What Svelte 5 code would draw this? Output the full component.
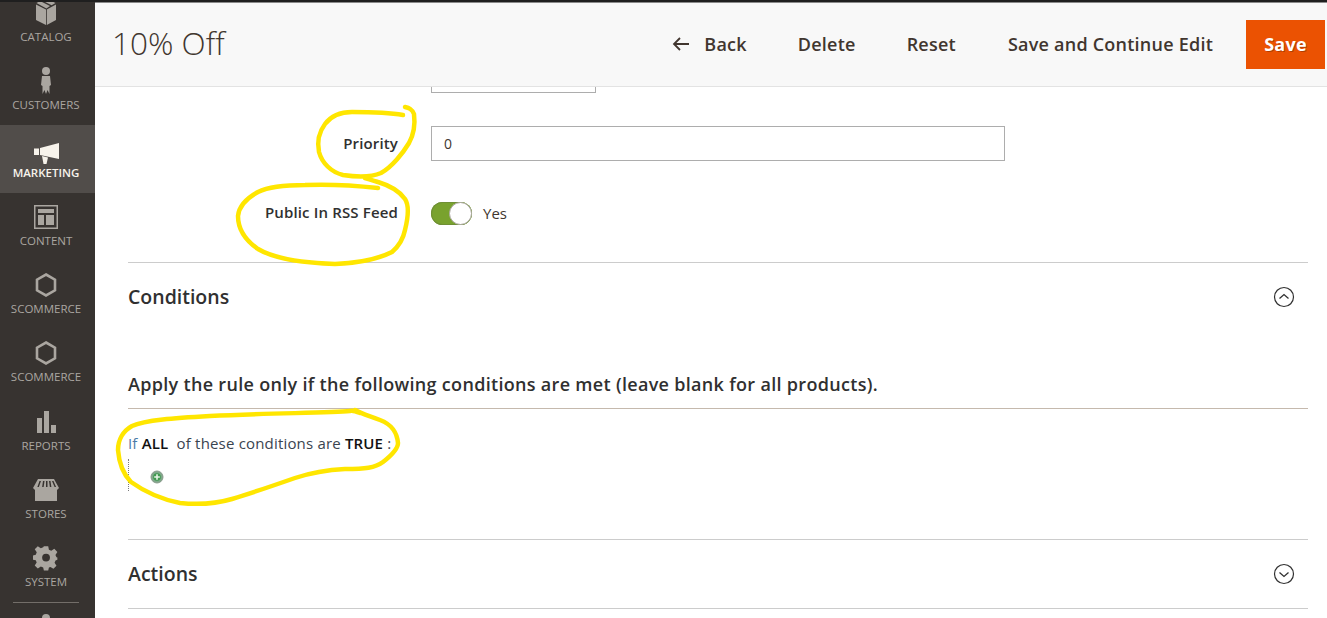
<script>
  const navTop = [
    { label: 'Catalog', icon: 'catalog' },
    { label: 'Customers', icon: 'customers' },
    { label: 'Marketing', icon: 'marketing', active: true },
    { label: 'Content', icon: 'content' },
    { label: 'Scommerce', icon: 'hex' },
    { label: 'Scommerce', icon: 'hex' },
    { label: 'Reports', icon: 'reports' },
    { label: 'Stores', icon: 'stores' },
    { label: 'System', icon: 'system' }
  ];
</script>

<div class="page">
  <aside class="side">
    {#each navTop as item}
      <div class="nav" class:active={item.active}>
        <svg class="ico" viewBox="0 0 30 30" width="30" height="30" fill="currentColor" aria-hidden="true">
          {#if item.icon === 'catalog'}
            <path d="M5 6.5 15 11.5V27L5 22ZM25 6.5 15.8 11.5V27L25 22ZM5.5 5 9 3 19 8 15.4 10.4ZM10.5 2.2 14.5 0 24.5 5 20.6 7.2Z" />
          {:else if item.icon === 'customers'}
            <circle cx="15" cy="5" r="4" />
            <path d="M11 10H19L20 19 18.5 20V28L16.5 24 15 28 13.5 24 11.5 28V20L10 19Z" />
          {:else if item.icon === 'marketing'}
            <path d="M9 14 28 9V25L9 21ZM3 14.5H8V21H3ZM11 22 17 23.5 15.5 30H12.5Z" />
          {:else if item.icon === 'content'}
            <path fill-rule="evenodd" d="M3 3H27V27H3ZM4.5 4.5V25.5H25.5V4.5ZM7 7H23V11H7ZM7 13H13V23H7ZM15 13H23V23H15Z" />
          {:else if item.icon === 'hex'}
            <path d="M15 4.5 24 9.7V20.3L15 25.5 6 20.3V9.7Z" fill="none" stroke="currentColor" stroke-width="2.6" />
          {:else if item.icon === 'reports'}
            <path d="M6 11H11V26H6ZM13 4H18V26H13ZM20 18H25V26H20Z" />
          {:else if item.icon === 'stores'}
            <path d="M6 13H28V27H6Z" transform="translate(-2 -1)" />
            <path fill-rule="evenodd" d="M7 4H23L28 13 26 15H4L2 13ZM8.5 6 6 13H7.5L10 6ZM12 6 11 13H12.5L13.5 6ZM15 6 15 13H16.5L16.5 6ZM18 6 19 13H20.5L19.5 6ZM21 6 24 13H25.5L22.5 6Z" />
          {:else}
            <path fill-rule="evenodd" d="M12.5 2H17.5L18.3 6 21 7.2 24.5 5 28 8.5 25.8 12 27 14.7 28 15 28 17.5 25.9 18.3 24.8 21 27 24.5 23.5 28 20 25.8 18.3 26.5 17.5 30H12.5L11.7 26.5 9 25.4 5.5 27.6 2 24 4.2 20.6 3.2 18 0 17.5V12.5L3.2 11.7 4.3 9 2 5.5 5.5 2 9 4.2 11.7 3.2ZM15 10.5A4.5 4.5 0 1 0 15 19.5 4.5 4.5 0 1 0 15 10.5Z" transform="translate(2 1.5) scale(.87)" />
          {/if}
        </svg>
        <span class="nav-label">{item.label}</span>
      </div>
    {/each}
    <div class="nav-rule"></div>
    <div class="nav-next"></div>
  </aside>

  <main class="main">
    <header class="bar">
      <h1>10% Off</h1>
      <div class="actions">
        <span class="act back">
          <svg viewBox="0 0 18 14" width="18" height="14" fill="none" stroke="#41362f" stroke-width="1.8" aria-hidden="true">
            <path d="M17 7H2M8 1 2 7 8 13" />
          </svg>
          Back
        </span>
        <span class="act">Delete</span>
        <span class="act">Reset</span>
        <span class="act">Save and Continue Edit</span>
        <span class="save">Save</span>
      </div>
    </header>

    <section class="content">
      <div class="row clipped">
        <span class="lbl"></span>
        <div class="input short"></div>
      </div>
      <div class="row prio">
        <span class="lbl">Priority</span>
        <div class="input long">0</div>
      </div>
      <div class="row rss">
        <span class="lbl">Public In RSS Feed</span>
        <span class="toggle"><span class="knob"></span></span>
        <span class="yes">Yes</span>
      </div>

      <div class="sect open">
        <h2>Conditions</h2>
        <svg viewBox="0 0 22 22" width="22" height="22" fill="none" stroke="#303030" aria-hidden="true">
          <circle cx="11" cy="11" r="9.5" stroke-width="1.2" />
          <path d="M6.5 12.5 11 8.5 15.5 12.5" stroke-width="1.3" />
        </svg>
      </div>
      <h3>Apply the rule only if the following conditions are met (leave blank for all products).</h3>
      <p class="rule"><span class="if">If</span> <b>ALL</b>&nbsp; of these conditions are <b>TRUE</b> :</p>
      <div class="tree">
        <svg viewBox="0 0 14 14" width="14" height="14" aria-hidden="true">
          <circle cx="7" cy="7" r="6" fill="#7fa98a" stroke="#8a9a8d" />
          <circle cx="7" cy="7" r="3.8" fill="#3f9a4f" />
          <path d="M7 4.2V9.8M4.2 7H9.8" stroke="#e6f3e6" stroke-width="1.6" />
        </svg>
      </div>
      <div class="sect closed">
        <h2>Actions</h2>
        <svg viewBox="0 0 22 22" width="22" height="22" fill="none" stroke="#303030" aria-hidden="true">
          <circle cx="11" cy="11" r="9.5" stroke-width="1.2" />
          <path d="M6.5 9.5 11 13.5 15.5 9.5" stroke-width="1.3" />
        </svg>
      </div>
    </section>
  </main>

  <svg class="marks" viewBox="0 0 1327 618" width="1327" height="618" fill="none" stroke="#ffe600" stroke-width="4.5" stroke-linecap="round" stroke-linejoin="round" aria-hidden="true">
    <path d="M403 115C392 113 370 112 352 112 340 112 331 116 325 124 319 132 317 142 319 152 322 163 331 172 343 175 356 177 372 177 381 173 392 167 403 153 409 143 414 134 415 122 414 114 412 109 409 108 405 107" />
    <path d="M378 188C360 186 330 184 305 185 285 185 268 187 258 192 247 198 239 206 238 216 238 228 245 240 258 249 275 259 305 263 335 264 360 263 380 258 392 252 399 246 403 240 405 230 408 218 409 205 405 199 398 189 388 185 378 182 372 180 368 179 365 178" />
    <path d="M360 413C355 411 352 410 350 411 330 413 270 413 210 416 175 418 145 420 132 426 123 431 118 440 118 450 119 463 122 473 131 482 145 492 160 499 180 503 200 505 215 504 232 499 255 492 275 485 295 478 310 473 325 470 345 469 365 469 375 468 383 462 392 455 398 449 398 443 397 433 393 425 380 420 370 416 362 414 355 410" />
  </svg>
</div>

<style>
  :global(body) {
    margin: 0;
    background: #fff;
  }
  .page {
    position: relative;
    display: flex;
    width: 1327px;
    height: 618px;
    overflow: hidden;
    border-top: 2px solid #1f1f1f;
    box-sizing: border-box;
    font-family: "Open Sans", "Noto Sans", sans-serif;
    color: #303030;
  }
  .side {
    flex: 0 0 95px;
    box-sizing: border-box;
    display: flex;
    flex-direction: column;
    background: #373330;
    overflow: hidden;
  }
  .nav {
    flex: 0 0 68.125px;
    display: flex;
    flex-direction: column;
    align-items: center;
    justify-content: flex-end;
    padding: 0 3px 13px 0;
    box-sizing: border-box;
    color: #aaa6a0;
  }
  .nav:first-child {
    margin-top: -13.3px;
  }
  .nav.active {
    background: #514d4a;
    color: #f7f3eb;
  }
  .ico {
    display: block;
    margin-bottom: 2px;
  }
  .nav-label {
    font-size: 11.5px;
    line-height: 14px;
    text-transform: uppercase;
  }
  .nav.active .nav-label {
    font-weight: 600;
  }
  .nav-rule {
    flex: none;
    width: 66px;
    height: 1px;
    margin: 0 16px 0 13px;
    background: #736e69;
  }
  .nav-next {
    flex: none;
    width: 8px;
    height: 8px;
    border-radius: 50%;
    margin: 11px 0 0 42px;
    background: #aaa6a0;
  }
  .main {
    flex: 1;
    min-width: 0;
    display: flex;
    flex-direction: column;
  }
  .bar {
    flex: 0 0 85px;
    box-sizing: border-box;
    display: flex;
    align-items: center;
    justify-content: space-between;
    padding: 0 2px 0 17px;
    background: #f8f8f8;
    border-bottom: 1px solid #e3e3e3;
    box-shadow: inset 0 1px 0 #8a8a8a;
    position: relative;
    z-index: 1;
  }
  h1 {
    margin: 0 0 4px;
    font-size: 31.5px;
    font-weight: 300;
    color: #41362f;
  }
  .actions {
    display: flex;
    align-items: center;
  }
  .act {
    display: flex;
    align-items: center;
    gap: 14px;
    margin: 0 33px 1px 0;
    font-size: 18px;
    letter-spacing: .23px;
    font-weight: 600;
    color: #41362f;
    white-space: nowrap;
  }
  .act.back {
    margin-right: 51px;
  }
  .act:nth-child(2) {
    margin-right: 51px;
  }
  .act:nth-child(3) {
    margin-right: 52px;
  }
  .save {
    display: block;
    box-sizing: border-box;
    width: 79px;
    height: 49px;
    margin-top: 1px;
    line-height: 48px;
    text-align: center;
    background: #eb5202;
    color: #fff;
    font-size: 18px;
    letter-spacing: .23px;
    font-weight: 700;
    text-shadow: 1px 1px 0 rgba(0, 0, 0, .25);
  }
  .content {
    flex: 1;
    margin: 0 19px 0 33px;
    min-height: 0;
  }
  .row {
    display: flex;
    align-items: center;
  }
  .lbl {
    flex: 0 0 270px;
    text-align: right;
    font-size: 15px;
    letter-spacing: .15px;
    font-weight: 600;
    color: #303030;
    margin-right: 33px;
  }
  .input {
    box-sizing: border-box;
    height: 35px;
    border: 1px solid #adadad;
    background: #fff;
    font-size: 14px;
    line-height: 33px;
    padding-left: 12px;
    color: #41362f;
  }
  .clipped {
    margin-top: -29px;
  }
  .short {
    width: 165px;
  }
  .long {
    width: 574px;
  }
  .prio {
    margin-top: 33px;
  }
  .prio .lbl {
    margin-bottom: 2px;
  }
  .rss {
    margin-top: 40px;
    height: 24px;
  }
  .rss .lbl {
    margin-bottom: 2px;
  }
  .toggle {
    position: relative;
    display: block;
    width: 41px;
    height: 23px;
    border-radius: 12px;
    background: #79a22e;
    box-shadow: inset 0 0 0 1px #6f8f35;
  }
  .knob {
    position: absolute;
    top: 0;
    right: 0;
    box-sizing: border-box;
    width: 23px;
    height: 23px;
    border-radius: 50%;
    background: #fff;
    border: 1px solid #aaa6a0;
  }
  .yes {
    margin-left: 11px;
    font-size: 15px;
    color: #41362f;
  }
  .sect {
    display: flex;
    align-items: center;
    justify-content: space-between;
    padding-right: 13px;
    border-top: 1px solid #cccccc;
    box-sizing: border-box;
  }
  .sect.open {
    margin-top: 37px;
    height: 69px;
  }
  .sect.closed {
    height: 70px;
    border-bottom: 1px solid #cccccc;
  }
  h2 {
    margin: 0 0 2px;
    font-size: 19.5px;
    font-weight: 600;
    color: #303030;
  }
  h3 {
    margin: 37px 0 0;
    height: 28px;
    padding: 2px 0 10px;
    line-height: 29px;
    box-sizing: content-box;
    font-size: 18px;
    letter-spacing: .31px;
    font-weight: 600;
    color: #303030;
    border-bottom: 1px solid #c5b9ad;
  }
  .rule {
    margin: 0;
    padding-top: 24px;
    font-size: 15px;
    letter-spacing: .18px;
    line-height: 20px;
    color: #3a4450;
  }
  .if {
    color: #4b7ba8;
  }
  .rule b {
    font-weight: 600;
    color: #111;
  }
  .tree {
    height: 32px;
    margin: 6px 0 48px;
    border-left: 1px dotted #7a7a7a;
    box-sizing: border-box;
    padding: 11px 0 0 21px;
  }
  .tree svg {
    display: block;
  }
  .marks {
    position: absolute;
    left: 0;
    top: -2px;
    z-index: 2;
    pointer-events: none;
  }
</style>
